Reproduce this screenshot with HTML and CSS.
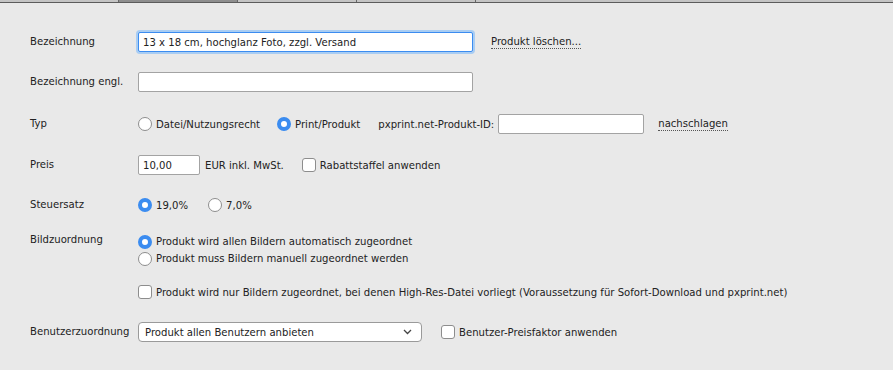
FILE: index.html
```html
<!DOCTYPE html>
<html lang="de">
<head>
    <meta charset="UTF-8">
    <title>Produkt bearbeiten</title>
    <link rel="stylesheet" href="styles.css">
</head>
<body>
    <div class="tabstrip">
        <span class="tab"></span>
        <span class="tab tab-active"></span>
        <span class="tab"></span>
        <span class="tab"></span>
        <span class="tab tab-rest"></span>
    </div>

    <div class="form">
        <div class="row row-name">
            <div class="label">Bezeichnung</div>
            <div class="field">
                <input class="text wide focused" type="text" value="13 x 18 cm, hochglanz Foto, zzgl. Versand">
                <a class="action delete">Produkt löschen...</a>
            </div>
        </div>

        <div class="row row-name-en">
            <div class="label">Bezeichnung engl.</div>
            <div class="field">
                <input class="text wide" type="text">
            </div>
        </div>

        <div class="row row-type">
            <div class="label">Typ</div>
            <div class="field">
                <label class="opt"><span class="radio"></span>Datei/Nutzungsrecht</label>
                <label class="opt opt-gap"><span class="radio checked"></span>Print/Produkt</label>
                <span class="plain id-label">pxprint.net-Produkt-ID:</span>
                <input class="text idbox" type="text">
                <a class="action lookup">nachschlagen</a>
            </div>
        </div>

        <div class="row row-price">
            <div class="label">Preis</div>
            <div class="field">
                <input class="text price" type="text" value="10,00">
                <span class="plain unit">EUR inkl. MwSt.</span>
                <label class="opt"><span class="check"></span>Rabattstaffel anwenden</label>
            </div>
        </div>

        <div class="row row-tax">
            <div class="label">Steuersatz</div>
            <div class="field">
                <label class="opt"><span class="radio checked"></span>19,0%</label>
                <label class="opt tax-gap"><span class="radio"></span>7,0%</label>
            </div>
        </div>

        <div class="row row-images">
            <div class="label label-top">Bildzuordnung</div>
            <div class="field stack">
                <label class="opt line"><span class="radio checked"></span>Produkt wird allen Bildern automatisch zugeordnet</label>
                <label class="opt line"><span class="radio"></span>Produkt muss Bildern manuell zugeordnet werden</label>
            </div>
        </div>

        <div class="row row-hires">
            <div class="label"></div>
            <div class="field">
                <label class="opt"><span class="check"></span>Produkt wird nur Bildern zugeordnet, bei denen High-Res-Datei vorliegt (Voraussetzung für Sofort-Download und pxprint.net)</label>
            </div>
        </div>

        <div class="row row-users">
            <div class="label">Benutzerzuordnung</div>
            <div class="field">
                <div class="select">
                    <span>Produkt allen Benutzern anbieten</span>
                    <svg width="9" height="6" viewBox="0 0 9 6"><path d="M1 1l3.5 3.5L8 1" fill="none" stroke="#444" stroke-width="1.3"/></svg>
                </div>
                <label class="opt user-check"><span class="check"></span>Benutzer-Preisfaktor anwenden</label>
            </div>
        </div>
    </div>
</body>
</html>
```

FILE: styles.css
```css
:root {
    --bg: #e9e9e9;
    --text: #222;
    --blue: #3b8cf0;
    --border: #a3a3a3;
}

body {
    margin: 0;
    background: var(--bg);
    font-family: 'DejaVu Sans', Verdana, sans-serif;
    font-size: 10.1px;
    color: var(--text);
}

/* toolbar strip at the top edge */
.tabstrip {
    display: flex;
    height: 2px;
    border-bottom: 1px solid #5c5c5c;
    background: #c4c4c4;
}

.tab {
    width: 118px;
    border-right: 1px solid #666;
    background: #c4c4c4;
}

.tab-active {
    background: #8e8e8e;
}

.tab-rest {
    flex: 1;
    border-right: 0;
}

.form {
    padding-left: 30px;
}

.row {
    display: flex;
    min-height: 22px;
}

.row-name    { margin-top: 28px; }
.row-name-en { margin-top: 18px; }
.row-type    { margin-top: 20px; }
.row-price   { margin-top: 19px; }
.row-tax     { margin-top: 18px; }
.row-images  { margin-top: 17px; }
.row-hires   { margin-top: 14px; }
.row-users   { margin-top: 18px; }

.label {
    display: flex;
    align-items: center;
    width: 108px;
    flex-shrink: 0;
    padding-bottom: 2px;
}

.label-top {
    align-items: flex-start;
    padding-top: 1px;
}

.field {
    display: flex;
    align-items: center;
}

.stack {
    flex-direction: column;
    align-items: flex-start;
}

.line {
    height: 17px;
}

.text {
    box-sizing: border-box;
    height: 20px;
    margin: 0;
    padding: 0 4px;
    border: 1px solid var(--border);
    border-radius: 2px;
    background: #fff;
    font: inherit;
    color: var(--text);
}

.wide {
    width: 335px;
}

.focused {
    border-color: var(--blue);
    box-shadow: 0 0 0 2px #a9cdf3;
}

.idbox {
    width: 146px;
    margin-left: 4px;
}

.price {
    width: 62px;
}

.action {
    border-bottom: 1px dotted #555;
    line-height: 13px;
    color: var(--text);
}

.delete {
    margin-left: 18px;
}

.lookup {
    margin-left: 14px;
}

.plain {
    white-space: nowrap;
}

.id-label {
    margin-left: 18px;
}

.unit {
    margin-left: 5px;
    margin-right: 18px;
}

.opt {
    display: flex;
    align-items: center;
    white-space: nowrap;
}

.opt-gap {
    margin-left: 17px;
}

.tax-gap {
    margin-left: 20px;
}

.radio {
    box-sizing: border-box;
    width: 14px;
    height: 14px;
    margin-right: 4px;
    border: 1px solid #8d8d8d;
    border-radius: 50%;
    background: #fff;
}

.radio.checked {
    border: 4px solid var(--blue);
    background: #fff;
}

.check {
    box-sizing: border-box;
    width: 14px;
    height: 14px;
    margin-right: 4px;
    border: 1px solid #8d8d8d;
    border-radius: 3px;
    background: #fff;
}

.select {
    box-sizing: border-box;
    display: flex;
    align-items: center;
    justify-content: space-between;
    width: 284px;
    height: 20px;
    padding: 0 9px 0 6px;
    border: 1px solid #9a9a9a;
    border-radius: 4px;
    background: #fff;
}

.user-check {
    margin-left: 19px;
}
```
